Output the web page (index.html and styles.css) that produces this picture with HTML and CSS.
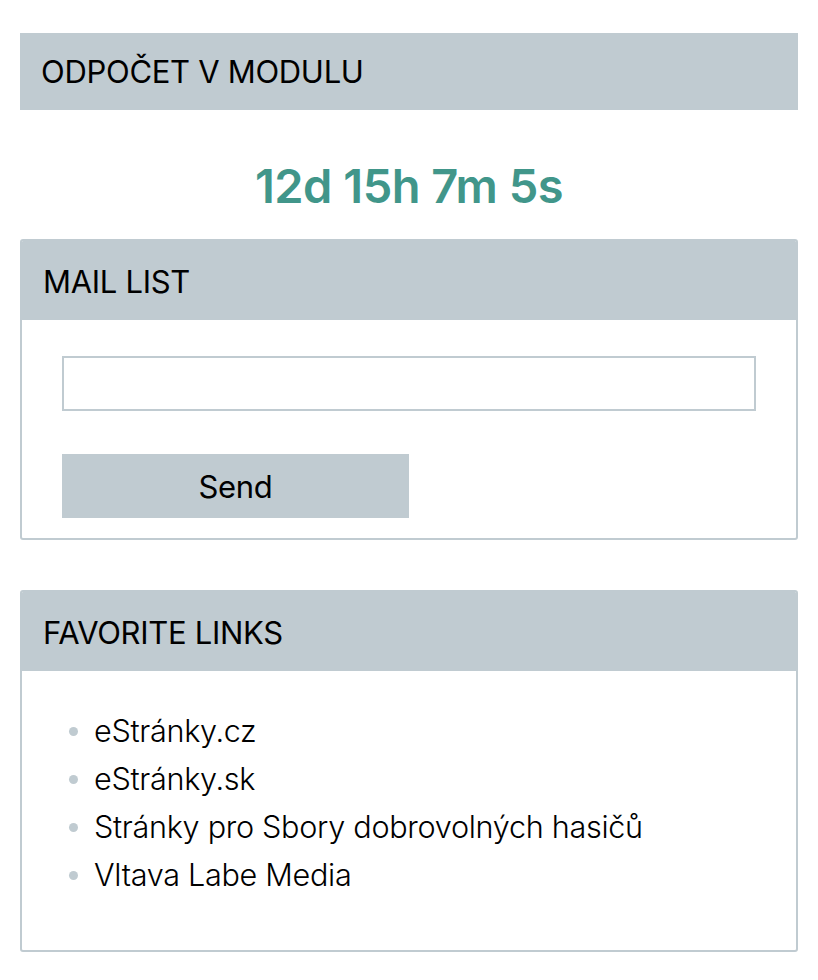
FILE: index.html
```html
<!DOCTYPE html>
<html lang="cs">
<head>
<meta charset="utf-8">
<title>Moduly</title>
<link rel="stylesheet" href="styles.css">
</head>
<body>
<div class="page">
  <section class="plain-module">
    <h2 class="module-title">ODPOČET V MODULU</h2>
    <div class="countdown">12d 15h 7m 5s</div>
  </section>

  <section class="box">
    <h2 class="box-title">MAIL LIST</h2>
    <form class="box-body mail-form">
      <input class="mail-input" type="text" aria-label="E-mail">
      <button class="send-btn" type="button">Send</button>
    </form>
  </section>

  <section class="box">
    <h2 class="box-title">FAVORITE LINKS</h2>
    <div class="box-body links-body">
      <ul class="links">
        <li><a href="#">eStránky.cz</a></li>
        <li><a href="#">eStránky.sk</a></li>
        <li><a href="#">Stránky pro Sbory dobrovolných hasičů</a></li>
        <li><a href="#">Vltava Labe Media</a></li>
      </ul>
    </div>
  </section>
</div>
</body>
</html>
```

FILE: styles.css
```css
* { box-sizing: border-box; }

html, body {
  margin: 0;
  padding: 0;
  background: #ffffff;
}

body {
  font-family: Inter, "Noto Sans", "Liberation Sans", sans-serif;
  color: #000;
}

.page {
  padding: 33px 20px 0 20px;
  display: flex;
  flex-direction: column;
}

.module-title {
  margin: 0;
  height: 77px;
  display: flex;
  align-items: center;
  padding-left: 21px;
  background: #c0cbd1;
  font-size: 31px;
  font-weight: 400;
  letter-spacing: -0.3px;
}

.countdown {
  text-align: center;
  color: #41968a;
  font-size: 47px;
  font-weight: 600;
  letter-spacing: -0.5px;
  line-height: 1;
  padding: 52px 0 0 0;
  height: 129px;
}

.box {
  border: 2px solid #c0cbd1;
  border-radius: 3px;
  overflow: hidden;
  margin-bottom: 50px;
}

.box-title {
  margin: 0;
  height: 79px;
  display: flex;
  align-items: center;
  padding-left: 21px;
  padding-top: 2px;
  background: #c0cbd1;
  font-size: 31px;
  font-weight: 400;
  letter-spacing: -0.3px;
}

.mail-form {
  padding: 36px 40px 20px 40px;
  display: flex;
  flex-direction: column;
  align-items: flex-start;
}

.mail-input {
  width: 694px;
  height: 55px;
  border: 2px solid #c0cbd1;
  background: #fff;
  margin: 0 0 43px 0;
  font: inherit;
}

.send-btn {
  width: 347px;
  height: 64px;
  border: 0;
  background: #c0cbd1;
  font-family: inherit;
  font-size: 31px;
  color: #000;
  letter-spacing: -0.3px;
}

.links-body {
  padding: 36px 0 51px 0;
}

.links {
  margin: 0;
  padding: 0 0 0 40px;
  list-style: none;
}

.links li {
  font-size: 30.6px;
  font-weight: 300;
  line-height: 48px;
  display: flex;
  align-items: center;
  letter-spacing: -0.3px;
}

.links li::before {
  content: "";
  width: 9px;
  height: 9px;
  border-radius: 50%;
  background: #c0cbd1;
  margin: 0 16px 0 7px;
  flex-shrink: 0;
}

.links a {
  color: #000;
  text-decoration: none;
}
```
